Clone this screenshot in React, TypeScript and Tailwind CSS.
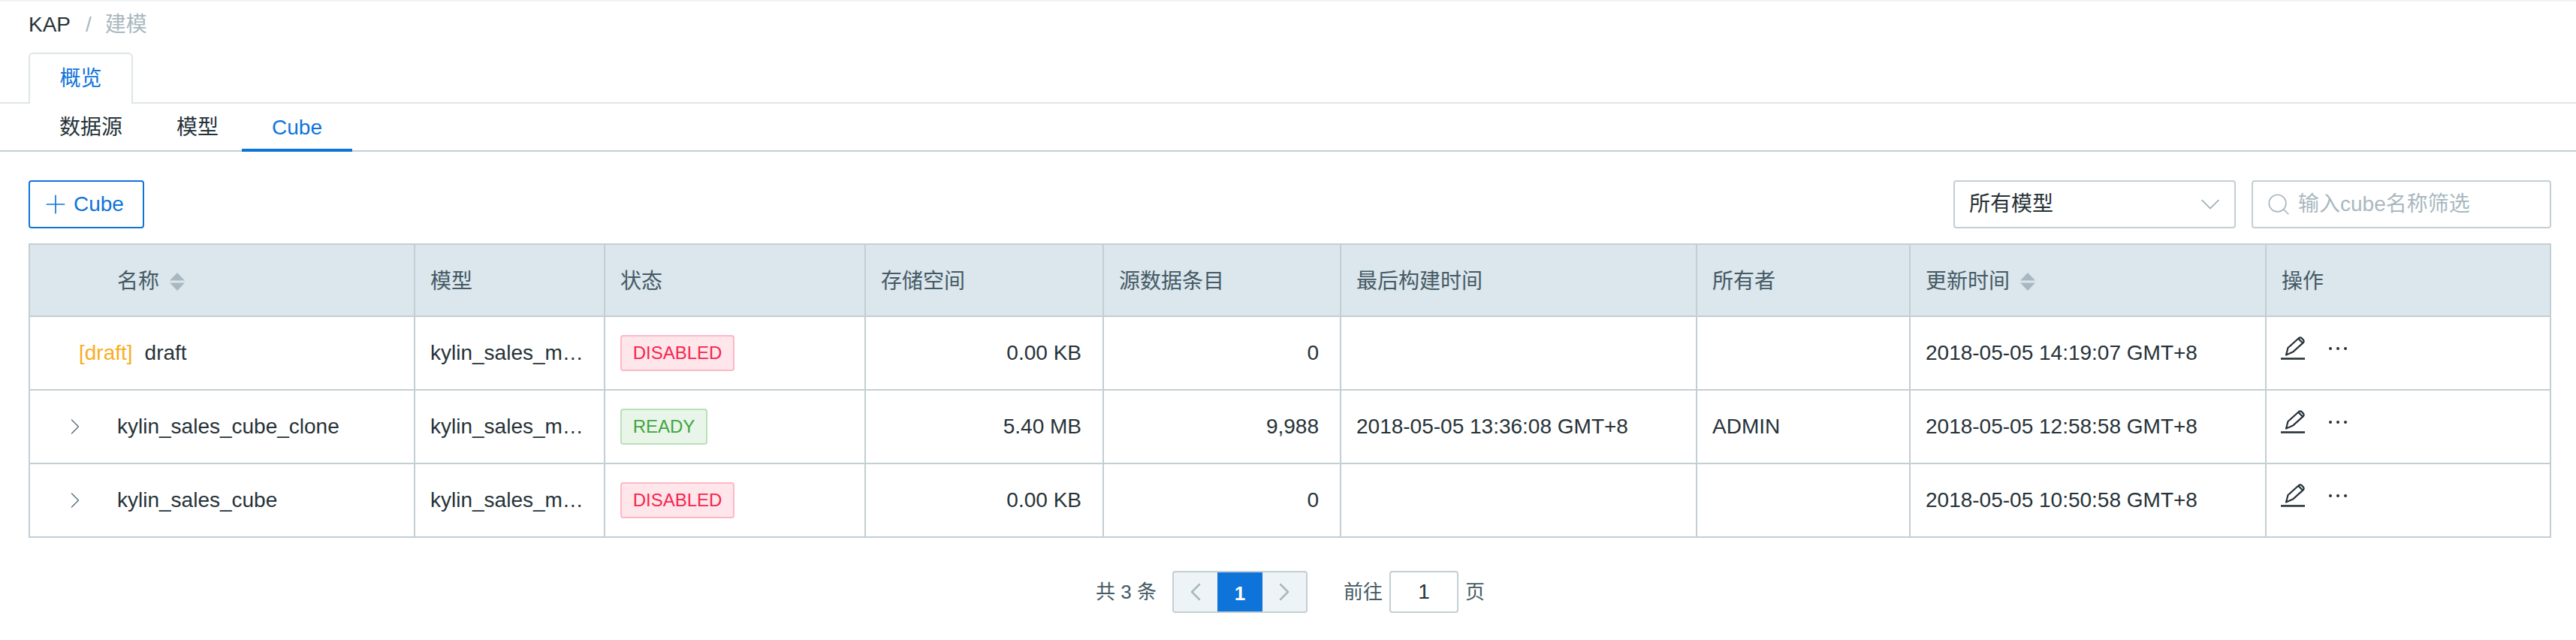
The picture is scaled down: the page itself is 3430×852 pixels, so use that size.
import { ChevronDown, ChevronLeft, ChevronRight, Plus, Search } from "lucide-react";

const font = { fontFamily: '"Liberation Sans", "Noto Sans CJK SC", sans-serif' };

const gridCols =
  "grid grid-cols-[513px_253px_347px_317px_316px_474px_284px_474px_1fr]";

const rows = [
  { draft: true, name: "draft", status: "DISABLED", size: "0.00 KB", count: "0", built: "", owner: "", updated: "2018-05-05 14:19:07 GMT+8" },
  { draft: false, name: "kylin_sales_cube_clone", status: "READY", size: "5.40 MB", count: "9,988", built: "2018-05-05 13:36:08 GMT+8", owner: "ADMIN", updated: "2018-05-05 12:58:58 GMT+8" },
  { draft: false, name: "kylin_sales_cube", status: "DISABLED", size: "0.00 KB", count: "0", built: "", owner: "", updated: "2018-05-05 10:50:58 GMT+8" },
];

const SortIcon = () => (
  <svg width="20" height="24" viewBox="0 0 20 24" className="ml-[14px]">
    <path d="M10 0 L20 10.5 H0 Z" fill="#a9b8c0" />
    <path d="M0 13.5 H20 L10 24 Z" fill="#a9b8c0" />
  </svg>
);

const EditIcon = () => (
  <svg width="32" height="32" viewBox="0 0 32 32" fill="none" stroke="#263238" strokeWidth="2.2" strokeLinejoin="round">
    <path d="M7 24.5 L9.5 15 L24 2 Q26 0.6 28 2.4 L30 4.6 Q31.4 6.6 29.6 8.4 L16 20.6 Z" />
    <path d="M23.5 3 L29.5 9" />
    <path d="M0 29.5 H32" strokeWidth="2.6" />
  </svg>
);

const DotsIcon = () => (
  <svg width="24" height="4" viewBox="0 0 24 4" fill="#263238" className="ml-[32px]">
    <circle cx="2" cy="2" r="2" />
    <circle cx="12" cy="2" r="2" />
    <circle cx="22" cy="2" r="2" />
  </svg>
);

const HeadCell = ({ label, sort, pad }: { label: string; sort?: boolean; pad?: boolean }) => (
  <div className={`flex items-center border-r-2 border-[#c3cfd3] pt-[4px] last:border-r-0 ${pad ? "pl-[116px]" : "pl-[20px]"}`}>
    <span>{label}</span>
    {sort && <SortIcon />}
  </div>
);

const StatusTag = ({ status }: { status: string }) =>
  status === "READY" ? (
    <span className="flex h-[48px] w-[116px] items-center justify-center rounded-[4px] border-2 border-[#b9e0b9] bg-[#e9f5e9] text-[24px] text-[#3fa63f]">
      READY
    </span>
  ) : (
    <span className="flex h-[48px] w-[152px] items-center justify-center rounded-[4px] border-2 border-[#fdb8c6] bg-[#ffe6ea] text-[24px] text-[#f5254f]">
      DISABLED
    </span>
  );

const cell = "flex items-center border-r-2 border-[#c3cfd3] min-w-0";

export default function App() {
  return (
    <div style={font} className="h-[852px] w-[3430px] overflow-hidden border-t-2 border-[#f1f3f4] bg-white text-[28px] text-[#263238]">
      <div className="flex h-[60px] items-center px-[38px] pt-[2px]">
        <span>KAP</span>
        <span className="ml-[20px] text-[#a9b8c0]">/</span>
        <span className="ml-[18px] text-[#a9b8c0]">建模</span>
      </div>

      <div className="h-[76px] border-b-2 border-[#dfe5e8] pl-[38px] pt-[8px]">
        <div className="flex h-[68px] w-[139px] items-center justify-center rounded-t-[6px] border-2 border-b-0 border-[#dfe5e8] bg-white text-[#0f74d9]">
          概览
        </div>
      </div>

      <div className="flex h-[64px] items-center border-b-2 border-[#c3cfd3]">
        <span className="ml-[79px] pt-[2px]">数据源</span>
        <span className="ml-[72px] pt-[2px]">模型</span>
        <span className="ml-[31px] flex h-[64px] items-center self-start border-b-4 border-[#0f74d9] px-[40px] pt-[4px] text-[#0f74d9]">Cube</span>
      </div>

      <div className="flex items-center justify-between pl-[38px] pr-[33px] pt-[38px]">
        <button className="flex h-[64px] w-[154px] items-center rounded-[4px] border-2 border-[#0f74d9] pl-[14px] text-[#0f74d9]">
          <Plus size={40} strokeWidth={1} className="shrink-0" />
          <span className="ml-[4px]">Cube</span>
        </button>
        <div className="flex gap-[21px]">
          <div className="flex h-[64px] w-[376px] items-center justify-between rounded-[4px] border-2 border-[#c3cfd3] pl-[19px] pr-[10px]">
            <span>所有模型</span>
            <ChevronDown size={44} strokeWidth={0.8} className="text-[#8fa2ab]" />
          </div>
          <div className="flex h-[64px] w-[399px] items-center rounded-[4px] border-2 border-[#c3cfd3] pl-[17px] text-[#a9b8c0]">
            <Search size={34} strokeWidth={1.2} className="shrink-0" />
            <span className="ml-[9px]">输入cube名称筛选</span>
          </div>
        </div>
      </div>

      <div className="ml-[38px] mr-[33px] mt-[20px] border-2 border-b-0 border-[#c3cfd3]">
        <div className={`${gridCols} h-[96px] border-b-2 border-[#c3cfd3] bg-[#dbe6ed] text-[#455a64]`}>
          <HeadCell label="名称" sort pad />
          <HeadCell label="模型" />
          <HeadCell label="状态" />
          <HeadCell label="存储空间" />
          <HeadCell label="源数据条目" />
          <HeadCell label="最后构建时间" />
          <HeadCell label="所有者" />
          <HeadCell label="更新时间" sort />
          <HeadCell label="操作" />
        </div>
        {rows.map((row, i) => (
          <div key={i} className={`${gridCols} h-[98px] border-b-2 border-[#c3cfd3]`}>
            <div className={cell}>
              {row.draft ? (
                <span className="ml-[65px] text-[#f9ad1f]">[draft]</span>
              ) : (
                <ChevronRight size={36} strokeWidth={0.9} className="ml-[42px] text-[#546e7a]" />
              )}
              <span className={row.draft ? "ml-[16px]" : "ml-[38px]"}>{row.name}</span>
            </div>
            <div className={`${cell} pl-[20px]`}>kylin_sales_m…</div>
            <div className={`${cell} pl-[20px]`}>
              <StatusTag status={row.status} />
            </div>
            <div className={`${cell} justify-end pr-[28px]`}>{row.size}</div>
            <div className={`${cell} justify-end pr-[28px]`}>{row.count}</div>
            <div className={`${cell} pl-[20px]`}>{row.built}</div>
            <div className={`${cell} pl-[20px]`}>{row.owner}</div>
            <div className={`${cell} pl-[20px]`}>{row.updated}</div>
            <div className="flex items-center pb-[12px] pl-[19px]">
              <EditIcon />
              <DotsIcon />
            </div>
          </div>
        ))}
      </div>

      <div className="mt-[44px] flex items-center justify-center pl-[6px] text-[26px] text-[#455a64]">
        <span>共 3 条</span>
        <div className="ml-[21px] flex h-[56px] w-[180px] overflow-hidden rounded-[4px] border-2 border-[#c3cfd3] bg-[#edf3f7]">
          <div className="flex flex-1 items-center justify-center text-[#a9b8c0]">
            <ChevronLeft size={40} strokeWidth={1.5} />
          </div>
          <div className="my-[-2px] flex w-[60px] items-center justify-center bg-[#0f74d9] pt-[4px] font-bold text-white">1</div>
          <div className="flex flex-1 items-center justify-center text-[#a9b8c0]">
            <ChevronRight size={40} strokeWidth={1.5} />
          </div>
        </div>
        <span className="ml-[48px]">前往</span>
        <div className="ml-[9px] flex h-[56px] w-[92px] items-center justify-center rounded-[4px] border-2 border-[#c3cfd3] text-[28px] text-[#263238]">1</div>
        <span className="ml-[9px]">页</span>
      </div>
    </div>
  );
}
